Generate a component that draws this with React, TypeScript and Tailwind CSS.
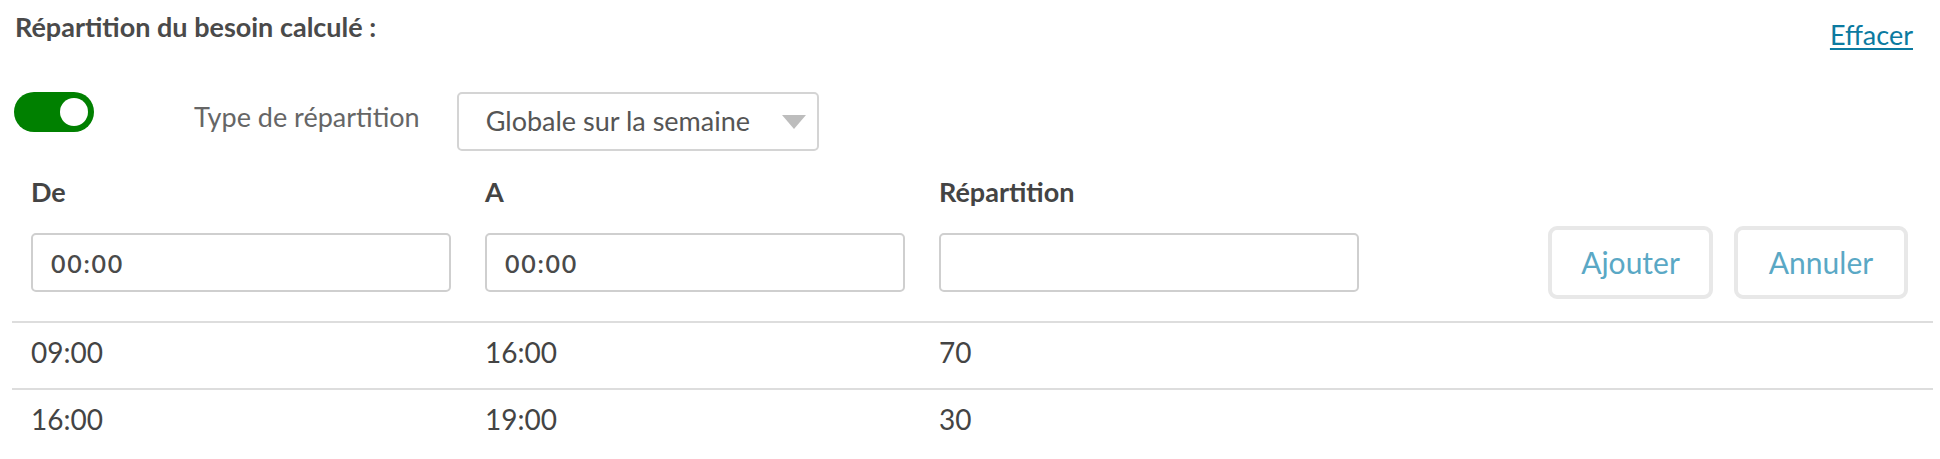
import { useState } from "react";

type Row = { from: string; to: string; part: string };

const rows: Row[] = [
  { from: "09:00", to: "16:00", part: "70" },
  { from: "16:00", to: "19:00", part: "30" },
];

export default function App() {
  const [enabled, setEnabled] = useState(true);

  return (
    <div className="w-[1940px] h-[459px] bg-white font-['Lato',sans-serif] pl-[12px] pr-[8px] overflow-hidden">
      {/* Header */}
      <div className="flex justify-between items-start h-[92px]">
        <h2 className="pt-[11px] pl-[3px] text-[27px] leading-[1.2] font-bold text-[#4a4a4a]">
          Répartition du besoin calculé :
        </h2>
        <a href="#" className="mt-[19px] mr-[19px] text-[27px] leading-[1.2] text-[#0b7aa0] underline underline-offset-[3px]">
          Effacer
        </a>
      </div>

      {/* Type de répartition */}
      <div className="flex items-start h-[59px]">
        <button
          type="button"
          onClick={() => setEnabled(!enabled)}
          className={`ml-[2px] w-[80px] h-[40px] rounded-full flex items-center px-[6px] ${
            enabled ? "bg-[#008000] justify-end" : "bg-gray-300 justify-start"
          }`}
        >
          <span className="w-[28px] h-[28px] rounded-full bg-white" />
        </button>
        <span className="ml-[100px] mt-[9px] text-[27px] leading-[1.2] text-[#666]">Type de répartition</span>
        <div className="ml-[37px] w-[362px] h-[59px] border-2 border-[#d4d4d4] rounded-[5px] flex items-center justify-between pl-[27px] pr-[11px]">
          <span className="text-[27px] leading-[1.2] text-[#555]">Globale sur la semaine</span>
          <svg width="24" height="14" viewBox="0 0 24 14">
            <polygon points="0,0 24,0 12,14" fill="#bdbdbd" />
          </svg>
        </div>
      </div>

      {/* Labels */}
      <div className="grid grid-cols-[420px_420px_420px] gap-x-[34px] pl-[19px] pt-[25px] h-[75px]">
        <span className="text-[27px] leading-[1.2] font-bold text-[#444]">De</span>
        <span className="text-[27px] leading-[1.2] font-bold text-[#444]">A</span>
        <span className="text-[27px] leading-[1.2] font-bold text-[#444]">Répartition</span>
      </div>

      {/* Inputs */}
      <div className="flex items-center h-[73px] pl-[19px]">
        <div className="grid grid-cols-[420px_420px_420px] gap-x-[34px]">
          <input
            defaultValue="00:00"
            className="h-[59px] border-2 border-[#cfcfcf] rounded-[5px] px-[18px] text-[25px] font-semibold tracking-[0.07em] text-[#4a4a4a] outline-none"
          />
          <input
            defaultValue="00:00"
            className="h-[59px] border-2 border-[#cfcfcf] rounded-[5px] px-[18px] text-[25px] font-semibold tracking-[0.07em] text-[#4a4a4a] outline-none"
          />
          <input className="h-[59px] border-2 border-[#cfcfcf] rounded-[5px] px-[18px] text-[25px] text-[#4a4a4a] outline-none" />
        </div>
        <div className="ml-auto mr-[24px] flex gap-[21px]">
          <button className="w-[165px] h-[73px] border-[4px] border-[#e8e8e8] rounded-[9px] text-[30px] text-[#5aa8c5]">
            Ajouter
          </button>
          <button className="w-[174px] h-[73px] border-[4px] border-[#e8e8e8] rounded-[9px] text-[30px] text-[#5aa8c5]">
            Annuler
          </button>
        </div>
      </div>

      {/* Table */}
      <div className="mt-[22px] mr-[-1px]">
        {rows.map((r) => (
          <div key={r.from + r.to} className="border-t-2 border-[#dddddd] h-[67px] flex items-center pl-[19px] pb-[7px]">
            <div className="grid grid-cols-[420px_420px_420px] gap-x-[34px] text-[28px] text-[#444]">
              <span>{r.from}</span>
              <span>{r.to}</span>
              <span>{r.part}</span>
            </div>
          </div>
        ))}
      </div>
    </div>
  );
}
